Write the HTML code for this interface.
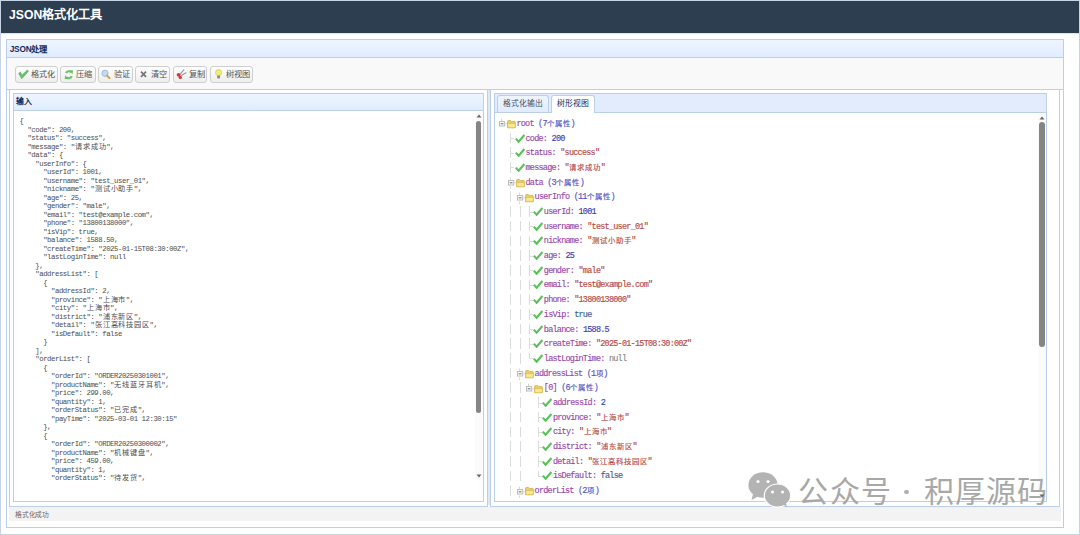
<!DOCTYPE html><html lang="zh-CN"><head><meta charset="utf-8"><style>
*{margin:0;padding:0;box-sizing:border-box}
html,body{width:1080px;height:535px;overflow:hidden;background:#fff}
body{position:relative;font-family:"Liberation Sans",sans-serif}
.a{position:absolute}
.bd{border:1px solid #bccfe9}
.ph{background:linear-gradient(#eff5ff,#e0ecff)}
.btn{position:absolute;top:66px;height:17px;border:1px solid #cfcfcf;border-radius:3px;background:linear-gradient(#ffffff,#ededed);}
.btn span{position:absolute;top:2.5px;font-size:8.3px;line-height:10px;color:#444;white-space:nowrap}
.btn svg{position:absolute;top:2.5px}
.code{position:absolute;left:19.5px;top:117.1px;font-family:"Liberation Mono",monospace;font-size:7.3px;letter-spacing:-0.44px;line-height:8.5px;color:#4c4c4c;white-space:pre}
.code i,.tr i{display:inline-block;font-style:normal;letter-spacing:0;text-align:center}
.code i{font-size:7.2px}
.tr{position:absolute;height:14.69px;font-family:"Liberation Mono",monospace;font-size:8.5px;letter-spacing:-0.76px;line-height:14.69px;white-space:pre;-webkit-text-stroke:0.15px currentColor}
.tr i{font-size:7.4px}
.k{color:#9848a8}.n{color:#3d3db8}.s{color:#b84a44}.b{color:#3a6090}.nl{color:#888}.m{color:#5252c4}
.g{position:absolute;width:1px;background:#dcdcdc}
</style></head><body>

<div class="a" style="left:0;top:0;width:1080px;height:535px;border:1px solid #c6d4e6"></div>
<div class="a" style="left:1px;top:1px;width:1078px;height:32px;background:#2c3e50"></div>
<div class="a" style="left:1px;top:33px;width:1078px;height:1px;background:#dbe4ee"></div>
<div class="a" style="left:9px;top:7px;font-size:12.2px;line-height:16px;font-weight:bold;color:#fff">JSON格式化工具</div>
<div class="a bd" style="left:6px;top:39px;width:1058px;height:489px"></div>
<div class="a ph" style="left:7px;top:40px;width:1056px;height:18px;border-bottom:1px solid #bccfe9"></div>
<div class="a" style="left:9.7px;top:43.6px;font-size:8.3px;letter-spacing:-0.2px;line-height:10px;font-weight:bold;color:#0e2d5f">JSON处理</div>
<div class="a" style="left:7px;top:58px;width:1056px;height:32px;background:#f9f9f9;border-bottom:1px solid #c6ced9"></div>
<div class="btn" style="left:15px;width:43px"></div>
<div class="a" style="left:30.8px;top:70.3px;font-size:8.2px;line-height:10px;color:#505050;white-space:nowrap">格式化</div>
<div class="btn" style="left:60px;width:35.5px"></div>
<div class="a" style="left:75.8px;top:70.3px;font-size:8.2px;line-height:10px;color:#505050;white-space:nowrap">压缩</div>
<div class="btn" style="left:98px;width:34.5px"></div>
<div class="a" style="left:113.8px;top:70.3px;font-size:8.2px;line-height:10px;color:#505050;white-space:nowrap">验证</div>
<div class="btn" style="left:135px;width:34.5px"></div>
<div class="a" style="left:150.8px;top:70.3px;font-size:8.2px;line-height:10px;color:#505050;white-space:nowrap">清空</div>
<div class="btn" style="left:173px;width:34px"></div>
<div class="a" style="left:188.8px;top:70.3px;font-size:8.2px;line-height:10px;color:#505050;white-space:nowrap">复制</div>
<div class="btn" style="left:210px;width:42.5px"></div>
<div class="a" style="left:225.8px;top:70.3px;font-size:8.2px;line-height:10px;color:#505050;white-space:nowrap">树视图</div>
<svg class="a" style="left:0;top:0" width="260" height="90" viewBox="0 0 260 90"><path d="M18.6 73.4 L20.4 71.9 L21.9 75.2 L27.4 69.9 L28.6 71.2 L21.8 78.8 Z" fill="#66c266" stroke="#4fa44f" stroke-width="0.5" stroke-linejoin="round"/><path d="M66 73.2 A3.3 3.3 0 0 1 71.4 72.2" stroke="#6cc46c" stroke-width="2.1" fill="none"/><path d="M71.8 76.2 A3.3 3.3 0 0 1 66.4 77.2" stroke="#6cc46c" stroke-width="2.1" fill="none"/><path d="M69.6 70.2 L73.2 70.6 L72.4 74.2Z M68.2 79.2 L64.6 78.8 L65.4 75.2Z" fill="#62bd62"/><circle cx="105" cy="73.3" r="3.1" fill="#bfdcf8" stroke="#9ab8d4" stroke-width="0.9"/><path d="M107 75.6 L109.5 78.1" stroke="#d89a3c" stroke-width="1.9" stroke-linecap="round"/><path d="M141 71.6 L146 76.9 M146 71.6 L141 76.9" stroke="#777" stroke-width="1.8"/><path d="M180.2 74.2 L183.8 69.8 M181.4 75.4 L186 72.8" stroke="#999" stroke-width="1.1" stroke-linecap="round"/><circle cx="178.6" cy="74.8" r="1.9" fill="#d23a3a"/><circle cx="180.3" cy="77.4" r="1.7" fill="#d23a3a"/><circle cx="218.6" cy="72.6" r="3.1" fill="#f1ec7c" stroke="#d8c85a" stroke-width="0.7"/><path d="M217.2 75.5 H220 V78.4 H217.2Z" fill="#8a8a8a"/></svg>
<div class="a bd" style="left:9px;top:89px;width:479px;height:418px;border-top-color:#c6ced9"></div>
<div class="a bd" style="left:490px;top:89px;width:570px;height:418px;border-top-color:#c6ced9"></div>
<div class="a" style="left:488px;top:90px;width:2px;height:415px;background:#dfe7f2"></div>
<div class="a" style="left:9px;top:507px;width:1052px;height:14px;background:#f3f3f3"></div>
<div class="a" style="left:15.3px;top:509.8px;font-size:6.8px;letter-spacing:-0.3px;line-height:9px;color:#6a6a6a">格式化成功</div>
<div class="a bd" style="left:13px;top:93px;width:471px;height:409px"></div>
<div class="a ph" style="left:14px;top:94px;width:469px;height:17px;border-bottom:1px solid #bccfe9"></div>
<div class="a" style="left:16px;top:97.3px;font-size:7.9px;line-height:10px;font-weight:bold;color:#0e2d5f">输入</div>
<div class="code">{
  "code": 200,
  "status": "success",
  "message": "<i style="width:7.88px">请</i><i style="width:7.88px">求</i><i style="width:7.88px">成</i><i style="width:7.88px">功</i>",
  "data": {
    "userInfo": {
      "userId": 1001,
      "username": "test_user_01",
      "nickname": "<i style="width:7.88px">测</i><i style="width:7.88px">试</i><i style="width:7.88px">小</i><i style="width:7.88px">助</i><i style="width:7.88px">手</i>",
      "age": 25,
      "gender": "male",
      "email": "test@example.com",
      "phone": "13800138000",
      "isVip": true,
      "balance": 1588.50,
      "createTime": "2025-01-15T08:30:00Z",
      "lastLoginTime": null
    },
    "addressList": [
      {
        "addressId": 2,
        "province": "<i style="width:7.88px">上</i><i style="width:7.88px">海</i><i style="width:7.88px">市</i>",
        "city": "<i style="width:7.88px">上</i><i style="width:7.88px">海</i><i style="width:7.88px">市</i>",
        "district": "<i style="width:7.88px">浦</i><i style="width:7.88px">东</i><i style="width:7.88px">新</i><i style="width:7.88px">区</i>",
        "detail": "<i style="width:7.88px">张</i><i style="width:7.88px">江</i><i style="width:7.88px">高</i><i style="width:7.88px">科</i><i style="width:7.88px">技</i><i style="width:7.88px">园</i><i style="width:7.88px">区</i>",
        "isDefault": false
      }
    ],
    "orderList": [
      {
        "orderId": "ORDER20250301001",
        "productName": "<i style="width:7.88px">无</i><i style="width:7.88px">线</i><i style="width:7.88px">蓝</i><i style="width:7.88px">牙</i><i style="width:7.88px">耳</i><i style="width:7.88px">机</i>",
        "price": 299.00,
        "quantity": 1,
        "orderStatus": "<i style="width:7.88px">已</i><i style="width:7.88px">完</i><i style="width:7.88px">成</i>",
        "payTime": "2025-03-01 12:30:15"
      },
      {
        "orderId": "ORDER20250300002",
        "productName": "<i style="width:7.88px">机</i><i style="width:7.88px">械</i><i style="width:7.88px">键</i><i style="width:7.88px">盘</i>",
        "price": 459.00,
        "quantity": 1,
        "orderStatus": "<i style="width:7.88px">待</i><i style="width:7.88px">发</i><i style="width:7.88px">货</i>",</div>
<div class="a" style="left:475px;top:112px;width:8px;height:368px;background:#fbfbfb"></div>
<div class="a" style="left:476px;top:120.8px;width:5.2px;height:292px;background:#858585;border-radius:3px"></div>
<svg class="a" style="left:476px;top:114px" width="6" height="4"><path d="M0.5 3.5 L3 0.5 L5.5 3.5Z" fill="#666"/></svg>
<svg class="a" style="left:476px;top:474px" width="6" height="4"><path d="M0.5 0.5 L3 3.5 L5.5 0.5Z" fill="#666"/></svg>
<div class="a bd" style="left:494px;top:93px;width:553px;height:409px"></div>
<div class="a ph" style="left:495px;top:94px;width:551px;height:19px;background:#e2ecfc;border-bottom:1px solid #bccfe9"></div>
<div class="a" style="left:497px;top:95px;width:52px;height:17px;border:1px solid #bccfe9;border-bottom:0;border-radius:3px 3px 0 0;background:linear-gradient(#eff5ff,#e0ecff)"></div>
<div class="a" style="left:503px;top:99px;font-size:7.8px;line-height:10px;color:#3e4d68">格式化输出</div>
<div class="a" style="left:551px;top:95px;width:44px;height:18px;border:1px solid #bccfe9;border-bottom:0;border-radius:3px 3px 0 0;background:#fff"></div>
<div class="a" style="left:557.2px;top:99px;font-size:7.8px;line-height:10px;color:#10275a">树形视图</div>
<svg class="a" style="left:499px;top:118.3px" width="10" height="14" viewBox="0 0 10 14"><path d="M2.5 0.5 V3.5" stroke="#d8d8d8" stroke-width="1"/><rect x="0.5" y="3.6" width="5.2" height="4.4" fill="#fff" stroke="#b4b4b4" stroke-width="0.9"/><path d="M1.7 5.8 H4.5" stroke="#555" stroke-width="0.9"/><path d="M5.7 5.8 H8" stroke="#d0d0d0" stroke-width="0.8"/></svg>
<svg class="a" style="left:506.6px;top:120.2px" width="10" height="9" viewBox="0 0 10 9"><path d="M0.6 1.3 Q0.6 0.5 1.4 0.5 H3.4 L4.3 1.4 H7.6 Q8.2 1.4 8.2 2 V7.6 H0.6Z" fill="#ecd067" stroke="#c9a540" stroke-width="0.7"/><path d="M0.6 3.4 H8.8 L8 7.8 H0.8Z" fill="#f9e98e" stroke="#d4b04a" stroke-width="0.6"/></svg>
<div class="tr" style="left:516.4px;top:116.8px"><span class="k">root</span> <span class="m">(7<i style="width:7.95px">个</i><i style="width:7.95px">属</i><i style="width:7.95px">性</i>)</span></div>
<div class="g" style="left:510px;top:132.7px;height:10.7px"></div>
<div class="g" style="left:510px;top:138.0px;width:4px;height:1px"></div>
<svg class="a" style="left:515.0px;top:133.5px" width="10" height="9" viewBox="0 0 10 9"><path d="M0.8 4.6 L3.6 7.8 L9.4 1" stroke="#5cc05c" stroke-width="2.1" fill="none"/></svg>
<div class="tr" style="left:525.5px;top:131.5px"><span class="k">code:</span> <span class="n">200</span></div>
<div class="g" style="left:510px;top:147.4px;height:10.7px"></div>
<div class="g" style="left:510px;top:152.7px;width:4px;height:1px"></div>
<svg class="a" style="left:515.0px;top:148.2px" width="10" height="9" viewBox="0 0 10 9"><path d="M0.8 4.6 L3.6 7.8 L9.4 1" stroke="#5cc05c" stroke-width="2.1" fill="none"/></svg>
<div class="tr" style="left:525.5px;top:146.2px"><span class="k">status:</span> <span class="s">"success"</span></div>
<div class="g" style="left:510px;top:162.1px;height:10.7px"></div>
<div class="g" style="left:510px;top:167.4px;width:4px;height:1px"></div>
<svg class="a" style="left:515.0px;top:162.9px" width="10" height="9" viewBox="0 0 10 9"><path d="M0.8 4.6 L3.6 7.8 L9.4 1" stroke="#5cc05c" stroke-width="2.1" fill="none"/></svg>
<div class="tr" style="left:525.5px;top:160.9px"><span class="k">message:</span> <span class="s">"<i style="width:7.95px">请</i><i style="width:7.95px">求</i><i style="width:7.95px">成</i><i style="width:7.95px">功</i>"</span></div>
<svg class="a" style="left:508px;top:177.1px" width="10" height="14" viewBox="0 0 10 14"><path d="M2.5 0.5 V3.5 M2.5 9.5 V12" stroke="#d8d8d8" stroke-width="1"/><rect x="0.5" y="3.6" width="5.2" height="4.4" fill="#fff" stroke="#b4b4b4" stroke-width="0.9"/><path d="M1.7 5.8 H4.5" stroke="#555" stroke-width="0.9"/><path d="M5.7 5.8 H8" stroke="#d0d0d0" stroke-width="0.8"/></svg>
<svg class="a" style="left:515.7px;top:179.0px" width="10" height="9" viewBox="0 0 10 9"><path d="M0.6 1.3 Q0.6 0.5 1.4 0.5 H3.4 L4.3 1.4 H7.6 Q8.2 1.4 8.2 2 V7.6 H0.6Z" fill="#ecd067" stroke="#c9a540" stroke-width="0.7"/><path d="M0.6 3.4 H8.8 L8 7.8 H0.8Z" fill="#f9e98e" stroke="#d4b04a" stroke-width="0.6"/></svg>
<div class="tr" style="left:525.5px;top:175.6px"><span class="k">data</span> <span class="m">(3<i style="width:7.95px">个</i><i style="width:7.95px">属</i><i style="width:7.95px">性</i>)</span></div>
<div class="g" style="left:510px;top:191.4px;height:10.7px"></div>
<svg class="a" style="left:517px;top:191.8px" width="10" height="14" viewBox="0 0 10 14"><path d="M2.5 0.5 V3.5 M2.5 9.5 V12" stroke="#d8d8d8" stroke-width="1"/><rect x="0.5" y="3.6" width="5.2" height="4.4" fill="#fff" stroke="#b4b4b4" stroke-width="0.9"/><path d="M1.7 5.8 H4.5" stroke="#555" stroke-width="0.9"/><path d="M5.7 5.8 H8" stroke="#d0d0d0" stroke-width="0.8"/></svg>
<svg class="a" style="left:524.8px;top:193.7px" width="10" height="9" viewBox="0 0 10 9"><path d="M0.6 1.3 Q0.6 0.5 1.4 0.5 H3.4 L4.3 1.4 H7.6 Q8.2 1.4 8.2 2 V7.6 H0.6Z" fill="#ecd067" stroke="#c9a540" stroke-width="0.7"/><path d="M0.6 3.4 H8.8 L8 7.8 H0.8Z" fill="#f9e98e" stroke="#d4b04a" stroke-width="0.6"/></svg>
<div class="tr" style="left:534.6px;top:190.2px"><span class="k">userInfo</span> <span class="m">(11<i style="width:7.95px">个</i><i style="width:7.95px">属</i><i style="width:7.95px">性</i>)</span></div>
<div class="g" style="left:510px;top:206.1px;height:10.7px"></div>
<div class="g" style="left:520px;top:206.1px;height:10.7px"></div>
<div class="g" style="left:529px;top:206.1px;height:10.7px"></div>
<div class="g" style="left:529px;top:211.5px;width:4px;height:1px"></div>
<svg class="a" style="left:533.2px;top:206.9px" width="10" height="9" viewBox="0 0 10 9"><path d="M0.8 4.6 L3.6 7.8 L9.4 1" stroke="#5cc05c" stroke-width="2.1" fill="none"/></svg>
<div class="tr" style="left:543.8px;top:204.9px"><span class="k">userId:</span> <span class="n">1001</span></div>
<div class="g" style="left:510px;top:220.8px;height:10.7px"></div>
<div class="g" style="left:520px;top:220.8px;height:10.7px"></div>
<div class="g" style="left:529px;top:220.8px;height:10.7px"></div>
<div class="g" style="left:529px;top:226.2px;width:4px;height:1px"></div>
<svg class="a" style="left:533.2px;top:221.6px" width="10" height="9" viewBox="0 0 10 9"><path d="M0.8 4.6 L3.6 7.8 L9.4 1" stroke="#5cc05c" stroke-width="2.1" fill="none"/></svg>
<div class="tr" style="left:543.8px;top:219.6px"><span class="k">username:</span> <span class="s">"test_user_01"</span></div>
<div class="g" style="left:510px;top:235.5px;height:10.7px"></div>
<div class="g" style="left:520px;top:235.5px;height:10.7px"></div>
<div class="g" style="left:529px;top:235.5px;height:10.7px"></div>
<div class="g" style="left:529px;top:240.9px;width:4px;height:1px"></div>
<svg class="a" style="left:533.2px;top:236.3px" width="10" height="9" viewBox="0 0 10 9"><path d="M0.8 4.6 L3.6 7.8 L9.4 1" stroke="#5cc05c" stroke-width="2.1" fill="none"/></svg>
<div class="tr" style="left:543.8px;top:234.3px"><span class="k">nickname:</span> <span class="s">"<i style="width:7.95px">测</i><i style="width:7.95px">试</i><i style="width:7.95px">小</i><i style="width:7.95px">助</i><i style="width:7.95px">手</i>"</span></div>
<div class="g" style="left:510px;top:250.2px;height:10.7px"></div>
<div class="g" style="left:520px;top:250.2px;height:10.7px"></div>
<div class="g" style="left:529px;top:250.2px;height:10.7px"></div>
<div class="g" style="left:529px;top:255.6px;width:4px;height:1px"></div>
<svg class="a" style="left:533.2px;top:251.0px" width="10" height="9" viewBox="0 0 10 9"><path d="M0.8 4.6 L3.6 7.8 L9.4 1" stroke="#5cc05c" stroke-width="2.1" fill="none"/></svg>
<div class="tr" style="left:543.8px;top:249.0px"><span class="k">age:</span> <span class="n">25</span></div>
<div class="g" style="left:510px;top:264.9px;height:10.7px"></div>
<div class="g" style="left:520px;top:264.9px;height:10.7px"></div>
<div class="g" style="left:529px;top:264.9px;height:10.7px"></div>
<div class="g" style="left:529px;top:270.2px;width:4px;height:1px"></div>
<svg class="a" style="left:533.2px;top:265.7px" width="10" height="9" viewBox="0 0 10 9"><path d="M0.8 4.6 L3.6 7.8 L9.4 1" stroke="#5cc05c" stroke-width="2.1" fill="none"/></svg>
<div class="tr" style="left:543.8px;top:263.7px"><span class="k">gender:</span> <span class="s">"male"</span></div>
<div class="g" style="left:510px;top:279.6px;height:10.7px"></div>
<div class="g" style="left:520px;top:279.6px;height:10.7px"></div>
<div class="g" style="left:529px;top:279.6px;height:10.7px"></div>
<div class="g" style="left:529px;top:284.9px;width:4px;height:1px"></div>
<svg class="a" style="left:533.2px;top:280.4px" width="10" height="9" viewBox="0 0 10 9"><path d="M0.8 4.6 L3.6 7.8 L9.4 1" stroke="#5cc05c" stroke-width="2.1" fill="none"/></svg>
<div class="tr" style="left:543.8px;top:278.4px"><span class="k">email:</span> <span class="s">"test@example.com"</span></div>
<div class="g" style="left:510px;top:294.3px;height:10.7px"></div>
<div class="g" style="left:520px;top:294.3px;height:10.7px"></div>
<div class="g" style="left:529px;top:294.3px;height:10.7px"></div>
<div class="g" style="left:529px;top:299.6px;width:4px;height:1px"></div>
<svg class="a" style="left:533.2px;top:295.1px" width="10" height="9" viewBox="0 0 10 9"><path d="M0.8 4.6 L3.6 7.8 L9.4 1" stroke="#5cc05c" stroke-width="2.1" fill="none"/></svg>
<div class="tr" style="left:543.8px;top:293.1px"><span class="k">phone:</span> <span class="s">"13800138000"</span></div>
<div class="g" style="left:510px;top:309.0px;height:10.7px"></div>
<div class="g" style="left:520px;top:309.0px;height:10.7px"></div>
<div class="g" style="left:529px;top:309.0px;height:10.7px"></div>
<div class="g" style="left:529px;top:314.3px;width:4px;height:1px"></div>
<svg class="a" style="left:533.2px;top:309.8px" width="10" height="9" viewBox="0 0 10 9"><path d="M0.8 4.6 L3.6 7.8 L9.4 1" stroke="#5cc05c" stroke-width="2.1" fill="none"/></svg>
<div class="tr" style="left:543.8px;top:307.8px"><span class="k">isVip:</span> <span class="b">true</span></div>
<div class="g" style="left:510px;top:323.7px;height:10.7px"></div>
<div class="g" style="left:520px;top:323.7px;height:10.7px"></div>
<div class="g" style="left:529px;top:323.7px;height:10.7px"></div>
<div class="g" style="left:529px;top:329.0px;width:4px;height:1px"></div>
<svg class="a" style="left:533.2px;top:324.5px" width="10" height="9" viewBox="0 0 10 9"><path d="M0.8 4.6 L3.6 7.8 L9.4 1" stroke="#5cc05c" stroke-width="2.1" fill="none"/></svg>
<div class="tr" style="left:543.8px;top:322.5px"><span class="k">balance:</span> <span class="n">1588.5</span></div>
<div class="g" style="left:510px;top:338.3px;height:10.7px"></div>
<div class="g" style="left:520px;top:338.3px;height:10.7px"></div>
<div class="g" style="left:529px;top:338.3px;height:10.7px"></div>
<div class="g" style="left:529px;top:343.7px;width:4px;height:1px"></div>
<svg class="a" style="left:533.2px;top:339.1px" width="10" height="9" viewBox="0 0 10 9"><path d="M0.8 4.6 L3.6 7.8 L9.4 1" stroke="#5cc05c" stroke-width="2.1" fill="none"/></svg>
<div class="tr" style="left:543.8px;top:337.1px"><span class="k">createTime:</span> <span class="s">"2025-01-15T08:30:00Z"</span></div>
<div class="g" style="left:510px;top:353.0px;height:10.7px"></div>
<div class="g" style="left:520px;top:353.0px;height:10.7px"></div>
<div class="g" style="left:529px;top:353.0px;height:5.8px"></div>
<div class="g" style="left:529px;top:358.4px;width:4px;height:1px"></div>
<svg class="a" style="left:533.2px;top:353.8px" width="10" height="9" viewBox="0 0 10 9"><path d="M0.8 4.6 L3.6 7.8 L9.4 1" stroke="#5cc05c" stroke-width="2.1" fill="none"/></svg>
<div class="tr" style="left:543.8px;top:351.8px"><span class="k">lastLoginTime:</span> <span class="nl">null</span></div>
<div class="g" style="left:510px;top:367.7px;height:10.7px"></div>
<svg class="a" style="left:517px;top:368.0px" width="10" height="14" viewBox="0 0 10 14"><path d="M2.5 0.5 V3.5 M2.5 9.5 V12" stroke="#d8d8d8" stroke-width="1"/><rect x="0.5" y="3.6" width="5.2" height="4.4" fill="#fff" stroke="#b4b4b4" stroke-width="0.9"/><path d="M1.7 5.8 H4.5" stroke="#555" stroke-width="0.9"/><path d="M5.7 5.8 H8" stroke="#d0d0d0" stroke-width="0.8"/></svg>
<svg class="a" style="left:524.8px;top:369.9px" width="10" height="9" viewBox="0 0 10 9"><path d="M0.6 1.3 Q0.6 0.5 1.4 0.5 H3.4 L4.3 1.4 H7.6 Q8.2 1.4 8.2 2 V7.6 H0.6Z" fill="#ecd067" stroke="#c9a540" stroke-width="0.7"/><path d="M0.6 3.4 H8.8 L8 7.8 H0.8Z" fill="#f9e98e" stroke="#d4b04a" stroke-width="0.6"/></svg>
<div class="tr" style="left:534.6px;top:366.5px"><span class="k">addressList</span> <span class="m">(1<i style="width:7.95px">项</i>)</span></div>
<div class="g" style="left:510px;top:382.4px;height:10.7px"></div>
<div class="g" style="left:520px;top:382.4px;height:10.7px"></div>
<svg class="a" style="left:526px;top:382.7px" width="10" height="14" viewBox="0 0 10 14"><path d="M2.5 0.5 V3.5" stroke="#d8d8d8" stroke-width="1"/><rect x="0.5" y="3.6" width="5.2" height="4.4" fill="#fff" stroke="#b4b4b4" stroke-width="0.9"/><path d="M1.7 5.8 H4.5" stroke="#555" stroke-width="0.9"/><path d="M5.7 5.8 H8" stroke="#d0d0d0" stroke-width="0.8"/></svg>
<svg class="a" style="left:534.0px;top:384.6px" width="10" height="9" viewBox="0 0 10 9"><path d="M0.6 1.3 Q0.6 0.5 1.4 0.5 H3.4 L4.3 1.4 H7.6 Q8.2 1.4 8.2 2 V7.6 H0.6Z" fill="#ecd067" stroke="#c9a540" stroke-width="0.7"/><path d="M0.6 3.4 H8.8 L8 7.8 H0.8Z" fill="#f9e98e" stroke="#d4b04a" stroke-width="0.6"/></svg>
<div class="tr" style="left:543.8px;top:381.2px"><span class="k">[0]</span> <span class="m">(6<i style="width:7.95px">个</i><i style="width:7.95px">属</i><i style="width:7.95px">性</i>)</span></div>
<div class="g" style="left:510px;top:397.1px;height:10.7px"></div>
<div class="g" style="left:520px;top:397.1px;height:10.7px"></div>
<div class="g" style="left:538px;top:397.1px;height:10.7px"></div>
<div class="g" style="left:538px;top:402.5px;width:4px;height:1px"></div>
<svg class="a" style="left:542.4px;top:397.9px" width="10" height="9" viewBox="0 0 10 9"><path d="M0.8 4.6 L3.6 7.8 L9.4 1" stroke="#5cc05c" stroke-width="2.1" fill="none"/></svg>
<div class="tr" style="left:552.9px;top:395.9px"><span class="k">addressId:</span> <span class="n">2</span></div>
<div class="g" style="left:510px;top:411.8px;height:10.7px"></div>
<div class="g" style="left:520px;top:411.8px;height:10.7px"></div>
<div class="g" style="left:538px;top:411.8px;height:10.7px"></div>
<div class="g" style="left:538px;top:417.1px;width:4px;height:1px"></div>
<svg class="a" style="left:542.4px;top:412.6px" width="10" height="9" viewBox="0 0 10 9"><path d="M0.8 4.6 L3.6 7.8 L9.4 1" stroke="#5cc05c" stroke-width="2.1" fill="none"/></svg>
<div class="tr" style="left:552.9px;top:410.6px"><span class="k">province:</span> <span class="s">"<i style="width:7.95px">上</i><i style="width:7.95px">海</i><i style="width:7.95px">市</i>"</span></div>
<div class="g" style="left:510px;top:426.5px;height:10.7px"></div>
<div class="g" style="left:520px;top:426.5px;height:10.7px"></div>
<div class="g" style="left:538px;top:426.5px;height:10.7px"></div>
<div class="g" style="left:538px;top:431.8px;width:4px;height:1px"></div>
<svg class="a" style="left:542.4px;top:427.3px" width="10" height="9" viewBox="0 0 10 9"><path d="M0.8 4.6 L3.6 7.8 L9.4 1" stroke="#5cc05c" stroke-width="2.1" fill="none"/></svg>
<div class="tr" style="left:552.9px;top:425.3px"><span class="k">city:</span> <span class="s">"<i style="width:7.95px">上</i><i style="width:7.95px">海</i><i style="width:7.95px">市</i>"</span></div>
<div class="g" style="left:510px;top:441.2px;height:10.7px"></div>
<div class="g" style="left:520px;top:441.2px;height:10.7px"></div>
<div class="g" style="left:538px;top:441.2px;height:10.7px"></div>
<div class="g" style="left:538px;top:446.5px;width:4px;height:1px"></div>
<svg class="a" style="left:542.4px;top:442.0px" width="10" height="9" viewBox="0 0 10 9"><path d="M0.8 4.6 L3.6 7.8 L9.4 1" stroke="#5cc05c" stroke-width="2.1" fill="none"/></svg>
<div class="tr" style="left:552.9px;top:440.0px"><span class="k">district:</span> <span class="s">"<i style="width:7.95px">浦</i><i style="width:7.95px">东</i><i style="width:7.95px">新</i><i style="width:7.95px">区</i>"</span></div>
<div class="g" style="left:510px;top:455.9px;height:10.7px"></div>
<div class="g" style="left:520px;top:455.9px;height:10.7px"></div>
<div class="g" style="left:538px;top:455.9px;height:10.7px"></div>
<div class="g" style="left:538px;top:461.2px;width:4px;height:1px"></div>
<svg class="a" style="left:542.4px;top:456.7px" width="10" height="9" viewBox="0 0 10 9"><path d="M0.8 4.6 L3.6 7.8 L9.4 1" stroke="#5cc05c" stroke-width="2.1" fill="none"/></svg>
<div class="tr" style="left:552.9px;top:454.7px"><span class="k">detail:</span> <span class="s">"<i style="width:7.95px">张</i><i style="width:7.95px">江</i><i style="width:7.95px">高</i><i style="width:7.95px">科</i><i style="width:7.95px">技</i><i style="width:7.95px">园</i><i style="width:7.95px">区</i>"</span></div>
<div class="g" style="left:510px;top:470.6px;height:10.7px"></div>
<div class="g" style="left:520px;top:470.6px;height:10.7px"></div>
<div class="g" style="left:538px;top:470.6px;height:5.8px"></div>
<div class="g" style="left:538px;top:475.9px;width:4px;height:1px"></div>
<svg class="a" style="left:542.4px;top:471.4px" width="10" height="9" viewBox="0 0 10 9"><path d="M0.8 4.6 L3.6 7.8 L9.4 1" stroke="#5cc05c" stroke-width="2.1" fill="none"/></svg>
<div class="tr" style="left:552.9px;top:469.4px"><span class="k">isDefault:</span> <span class="b">false</span></div>
<div class="g" style="left:510px;top:485.2px;height:10.7px"></div>
<svg class="a" style="left:517px;top:485.6px" width="10" height="14" viewBox="0 0 10 14"><path d="M2.5 0.5 V3.5 M2.5 9.5 V12" stroke="#d8d8d8" stroke-width="1"/><rect x="0.5" y="3.6" width="5.2" height="4.4" fill="#fff" stroke="#b4b4b4" stroke-width="0.9"/><path d="M1.7 5.8 H4.5" stroke="#555" stroke-width="0.9"/><path d="M5.7 5.8 H8" stroke="#d0d0d0" stroke-width="0.8"/></svg>
<svg class="a" style="left:524.8px;top:487.4px" width="10" height="9" viewBox="0 0 10 9"><path d="M0.6 1.3 Q0.6 0.5 1.4 0.5 H3.4 L4.3 1.4 H7.6 Q8.2 1.4 8.2 2 V7.6 H0.6Z" fill="#ecd067" stroke="#c9a540" stroke-width="0.7"/><path d="M0.6 3.4 H8.8 L8 7.8 H0.8Z" fill="#f9e98e" stroke="#d4b04a" stroke-width="0.6"/></svg>
<div class="tr" style="left:534.6px;top:484.1px"><span class="k">orderList</span> <span class="m">(2<i style="width:7.95px">项</i>)</span></div>
<div class="a" style="left:1038px;top:113px;width:8px;height:388px;background:#fbfbfb"></div>
<div class="a" style="left:1039px;top:122.4px;width:5.6px;height:225px;background:#858585;border-radius:3px"></div>
<svg class="a" style="left:1039px;top:116px" width="6" height="4"><path d="M0.5 3.5 L3 0.5 L5.5 3.5Z" fill="#666"/></svg>
<svg class="a" style="left:747px;top:472px" width="45" height="37" viewBox="0 0 45 37">
<ellipse cx="16" cy="13" rx="14.6" ry="12.8" fill="#b3b3b3"/><path d="M6 22 L4.5 28 L12 24Z" fill="#b3b3b3"/>
<ellipse cx="30.5" cy="23.5" rx="13.2" ry="11.5" fill="#b3b3b3" stroke="#fff" stroke-width="1.2"/><path d="M36 32 L40 35.5 L38.5 30Z" fill="#b3b3b3"/>
<circle cx="11" cy="9.5" r="1.6" fill="#fff"/><circle cx="21" cy="9.5" r="1.6" fill="#fff"/>
<circle cx="25.5" cy="20" r="1.5" fill="#fff"/><circle cx="35.5" cy="20" r="1.5" fill="#fff"/></svg>
<div class="a" style="left:798px;top:474px;font-size:30px;letter-spacing:1.7px;line-height:36px;font-weight:300;color:#a8a8a8;white-space:nowrap">公众号</div>
<div class="a" style="left:904.2px;top:489.5px;width:4.6px;height:4.6px;border-radius:50%;background:#b0b0b0"></div>
<div class="a" style="left:924px;top:474px;font-size:30px;letter-spacing:0.9px;line-height:36px;font-weight:300;color:#a8a8a8;white-space:nowrap">积厚源码</div>
<svg class="a" style="left:1039px;top:494px" width="6" height="4"><path d="M0.5 0.5 L3 3.5 L5.5 0.5Z" fill="#666"/></svg>
</body></html>
